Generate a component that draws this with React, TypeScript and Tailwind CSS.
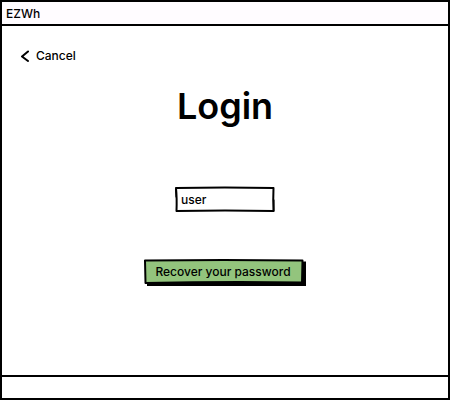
import { useState } from "react";

function FieldOutline() {
  return (
    <svg
      aria-hidden="true"
      className="pointer-events-none absolute inset-0 size-full overflow-visible"
      viewBox="0 0 100 26"
      preserveAspectRatio="none"
      fill="none"
      stroke="black"
      strokeLinejoin="round"
      strokeLinecap="round"
    >
      <path strokeWidth="2" d="M1 2 Q50 1 98.500 2 Q98 14 98.500 25 Q50 24 1.500 25 Q2 12 1 2Z" />
      <path strokeWidth="1" d="M.5 3 L1 11 M99 14 L99 25" />
    </svg>
  );
}

function ButtonOutline() {
  return (
    <svg
      aria-hidden="true"
      className="pointer-events-none absolute inset-0 size-full overflow-visible"
      viewBox="0 0 162 28"
      preserveAspectRatio="none"
      strokeLinejoin="round"
    >
      <path d="M3 4 L162 2.500 L162 27 L3 27Z" fill="black" />
      <path
        d="M1 1.500 Q80 0.500 158.500 1.500 L158 23.500 Q80 22.500 1.500 24Z"
        fill="#93c47d"
        stroke="black"
        strokeWidth="2"
      />
    </svg>
  );
}

export default function App() {
  const [user, setUser] = useState("user");

  return (
    <div className="flex min-h-screen flex-col border-2 border-black bg-white font-['Inter','Liberation_Sans',sans-serif] text-[12px] leading-5 font-medium text-black">
      <header className="border-b-2 border-black bg-[#fffcff] px-1 pt-0.5">
        EZWh
      </header>
      <main className="flex flex-1 flex-col items-center">
        <button type="button" className="mt-5 ml-4 flex items-center gap-1.5 self-start">
          <svg
            aria-hidden="true"
            className="size-3"
            viewBox="0 0 12 12"
            fill="none"
            stroke="black"
            strokeWidth="2"
            strokeLinecap="round"
            strokeLinejoin="round"
          >
            <path d="M10 1.500 L4 6.500 L10 11" />
          </svg>
          Cancel
        </button>
        <h1 className="mt-4 text-[36px] leading-12 font-semibold">Login</h1>
        <div className="relative mt-14 h-[26px] w-[100px]">
          <input
            aria-label="User"
            className="size-full bg-transparent px-1.5 outline-none"
            value={user}
            onChange={(event) => setUser(event.target.value)}
          />
          <FieldOutline />
        </div>
        <button type="button" className="relative mt-[47px] h-[28px] w-[162px] pr-1 pb-0.5 whitespace-nowrap">
          <ButtonOutline />
          <span className="relative">Recover your password</span>
        </button>
      </main>
      <footer className="h-[23px] border-t-2 border-black" />
    </div>
  );
}
